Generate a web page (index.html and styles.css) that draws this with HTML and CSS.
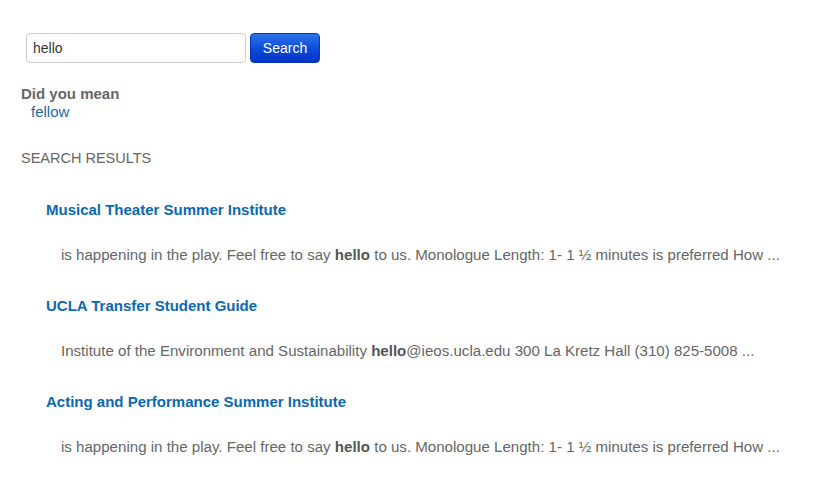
FILE: index.html
```html
<!DOCTYPE html>
<html>
<head>
<meta charset="utf-8">
<link rel="stylesheet" href="styles.css">
</head>
<body>
<div class="page">
  <form class="search-form">
    <input class="search-input" type="text" value="hello">
    <button class="search-btn" type="button">Search</button>
  </form>
  <div class="suggest">
    <div class="suggest-label">Did you mean</div>
    <a class="suggest-link" href="#">fellow</a>
  </div>
  <div class="results-head">SEARCH RESULTS</div>
  <ul class="results">
    <li class="result">
      <a class="result-title" href="#">Musical Theater Summer Institute</a>
      <p class="result-snippet">is happening in the play. Feel free to say <b>hello</b> to us. Monologue Length: 1- 1 ½ minutes is preferred How ...</p>
    </li>
    <li class="result">
      <a class="result-title" href="#">UCLA Transfer Student Guide</a>
      <p class="result-snippet">Institute of the Environment and Sustainability <b>hello</b>@ieos.ucla.edu 300 La Kretz Hall (310) 825-5008 ...</p>
    </li>
    <li class="result">
      <a class="result-title" href="#">Acting and Performance Summer Institute</a>
      <p class="result-snippet">is happening in the play. Feel free to say <b>hello</b> to us. Monologue Length: 1- 1 ½ minutes is preferred How ...</p>
    </li>
  </ul>
</div>
</body>
</html>
```

FILE: styles.css
```css
* { box-sizing: border-box; }
html, body { margin: 0; padding: 0; background: #fff; }
body {
  font-family: "Liberation Sans", Arial, sans-serif;
  font-size: 15px;
  color: #666;
}
.page { padding: 33px 0 0 21px; }
.search-form {
  display: flex;
  gap: 4px;
  margin: 0 0 0 5px;
  height: 30px;
}
.search-input {
  width: 220px;
  height: 30px;
  border: 1px solid #ccc;
  border-radius: 4px;
  padding: 0 6px;
  font-family: "Liberation Sans", Arial, sans-serif;
  font-size: 14px;
  color: #333;
  outline: none;
}
.search-btn {
  width: 70px;
  height: 30px;
  border: 1px solid #0836b8;
  border-radius: 4px;
  background: linear-gradient(#2a74e8, #0c4ad8 55%, #0434c4);
  color: #fff;
  font-family: "Liberation Sans", Arial, sans-serif;
  font-size: 14px;
  padding: 0;
}
.suggest { margin-top: 22px; line-height: 18px; }
.suggest-label { font-weight: bold; color: #666; }
.suggest-link { display: block; margin-left: 10px; color: #1a6aa8; text-decoration: none; }
.results-head { margin-top: 27px; line-height: 20px; font-size: 14.5px; text-transform: uppercase; color: #666; }
.results { list-style: none; margin: 32px 0 0 0; padding: 0 0 0 25px; }
.result { margin: 0 0 31px 0; }
.result-title {
  display: block;
  line-height: 20px;
  font-weight: bold;
  color: #0a68b4;
  text-decoration: none;
}
.result-snippet { margin: 25px 0 0 15px; line-height: 20px; font-size: 15.08px; color: #666; }
.result-snippet b { color: #555; }
```
